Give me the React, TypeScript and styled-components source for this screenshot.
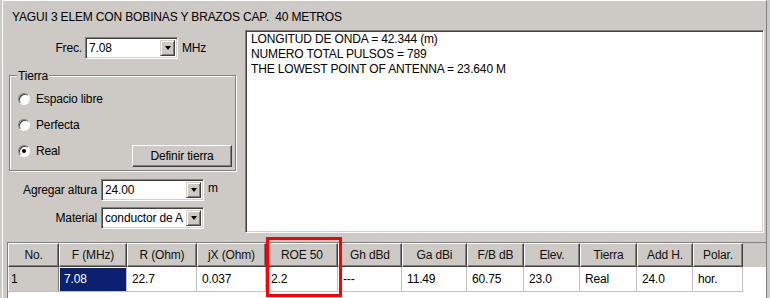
import React from 'react'
import styled, { createGlobalStyle } from 'styled-components'

const FACE = '#cdc9c5'

const GlobalStyle = createGlobalStyle`
  html, body { margin: 0; padding: 0; background: ${FACE}; }
  * { box-sizing: border-box; }
`

const Window = styled.div`
  position: relative;
  width: 770px;
  height: 298px;
  overflow: hidden;
  background: ${FACE};
  font-family: 'Liberation Sans', Arial, sans-serif;
  font-size: 12px;
  line-height: 14px;
  letter-spacing: -0.15px;
  color: #000;
  padding-left: 2px;
`

const Panel = styled.div`
  height: 100%;
  margin-right: 3px;
  border-left: 1px solid #fff;
  border-top: 1px solid #fff;
  border-right: 1px solid #808080;
`

const Title = styled.div`
  height: 29px;
  padding: 9px 0 0 9px;
  white-space: pre;
`

const TopSection = styled.div`
  display: flex;
  gap: 9px;
  height: 203px;
  padding-left: 5px;
`

const LeftCol = styled.div`
  width: 228px;
  padding-top: 7px;
  display: flex;
  flex-direction: column;
`

const FieldRow = styled.div<{ $gap: number }>`
  display: flex;
  align-items: center;
  height: 22px;
  margin-top: ${p => p.$gap}px;
`

const Label = styled.span<{ $w: number }>`
  width: ${p => p.$w}px;
  text-align: right;
  margin-right: ${p => (p.$w > 80 ? 4 : 3)}px;
`

const Unit = styled.span<{ $lift?: number }>`
  margin-left: 4px;
  margin-bottom: ${p => p.$lift || 0}px;
`

const Combo = styled.div<{ $w: number }>`
  width: ${p => p.$w}px;
  height: 22px;
  display: flex;
  background: #fff;
  border-style: solid;
  border-width: 1px;
  border-color: #808080 #fff #fff #808080;
  box-shadow: inset 1px 1px 0 #404040, inset -1px -1px 0 #d4d0c8;
  padding: 2px 2px 2px 3px;
`

const ComboText = styled.span`
  flex: 1;
  overflow: hidden;
  white-space: nowrap;
  line-height: 16px;
`

const DropButton = styled.span`
  width: 15px;
  height: 16px;
  background: ${FACE};
  border-style: solid;
  border-width: 1px;
  border-color: #d4d0c8 #404040 #404040 #d4d0c8;
  box-shadow: inset 1px 1px 0 #fff, inset -1px -1px 0 #808080;
  display: flex;
  align-items: center;
  justify-content: center;

  &::after {
    content: '';
    border-left: 3.5px solid transparent;
    border-right: 3.5px solid transparent;
    border-top: 4px solid #000;
  }
`

const GroupBox = styled.div`
  margin-top: 16px;
  margin-left: 1px;
  width: 227px;
  height: 96px;
  border: 1px solid #808080;
  box-shadow: inset 1px 1px 0 #fff, 1px 1px 0 #fff;
  display: flex;
  flex-direction: column;
  padding: 0 3px 0 8px;
`

const Legend = styled.span`
  align-self: flex-start;
  margin: -7px 0 3px -1px;
  padding: 0 1px;
  background: ${FACE};
`

const RadioRow = styled.div`
  display: flex;
  align-items: center;
  justify-content: space-between;
  height: 26px;
`

const RadioLabel = styled.label`
  display: flex;
  align-items: center;
  gap: 6px;
`

const RadioCircle = styled.span<{ $on?: boolean }>`
  width: 12px;
  height: 12px;
  border-radius: 50%;
  background: #fff;
  border: 1px solid;
  border-color: #808080 #fff #fff #808080;
  box-shadow: inset 1px 1px 0 #404040;
  display: flex;
  align-items: center;
  justify-content: center;

  &::after {
    content: '';
    width: 4px;
    height: 4px;
    border-radius: 50%;
    background: ${p => (p.$on ? '#000' : 'transparent')};
  }
`

const Button = styled.button`
  margin-top: 10px;
  width: 100px;
  height: 22px;
  font: inherit;
  letter-spacing: inherit;
  color: #000;
  background: ${FACE};
  border: 1px solid;
  border-color: #fff #404040 #404040 #fff;
  box-shadow: inset -1px -1px 0 #808080;
  padding: 0;
`

const TextArea = styled.div`
  width: 519px;
  height: 203px;
  background: #fff;
  border: 1px solid;
  border-color: #808080 #fff #fff #808080;
  box-shadow: inset 1px 1px 0 #404040, inset -1px -1px 0 #d4d0c8;
  padding: 1px 5px;
  line-height: 15px;
`

const Grid = styled.div`
  margin: 9px 0 0 4px;
  height: 60px;
  background: #fff;
  border-left: 1px solid #808080;
  border-top: 1px solid #808080;
`

const HeadRow = styled.div`
  display: flex;
  height: 24px;
  background: ${FACE};
`

const HeadCell = styled.div<{ $w: number }>`
  width: ${p => p.$w}px;
  display: flex;
  align-items: center;
  justify-content: center;
  border: 1px solid;
  border-color: #fff #404040 #404040 #fff;
  box-shadow: inset -1px -1px 0 #808080;
  color: #111;
`

const DataRow = styled.div`
  display: flex;
  height: 25px;
`

const DataCell = styled.div<{ $w: number; $kind?: 'head' | 'sel' }>`
  width: ${p => p.$w}px;
  display: flex;
  align-items: center;
  padding-left: ${p => (p.$kind === 'head' ? 3 : 5)}px;
  border-right: 1px solid ${p => (p.$kind === 'head' ? '#808080' : '#c0c0c0')};
  border-bottom: 1px solid #c0c0c0;
  background: ${p => (p.$kind === 'head' ? FACE : p.$kind === 'sel' ? '#0b2170' : '#fff')};
  color: ${p => (p.$kind === 'sel' ? '#fff' : '#000')};
  box-shadow: ${p => (p.$kind === 'head' ? 'inset 1px 0 0 #fff' : p.$kind === 'sel' ? 'inset 1px 1px 0 #fff' : 'none')};
`

const Highlight = styled.div`
  position: absolute;
  left: 266px;
  top: 237px;
  width: 76px;
  height: 60px;
  border: 3px solid #ff0000;
  pointer-events: none;
`

const columns = [
  { title: 'No.', w: 51, value: '1' },
  { title: 'F (MHz)', w: 68, value: '7.08' },
  { title: 'R (Ohm)', w: 70, value: '22.7' },
  { title: 'jX (Ohm)', w: 69, value: '0.037' },
  { title: 'ROE 50', w: 72, value: '2.2' },
  { title: 'Gh dBd', w: 64, value: '---' },
  { title: 'Ga dBi', w: 65, value: '11.49' },
  { title: 'F/B dB', w: 57, value: '60.75' },
  { title: 'Elev.', w: 56, value: '23.0' },
  { title: 'Tierra', w: 57, value: 'Real' },
  { title: 'Add H.', w: 56, value: '24.0' },
  { title: 'Polar.', w: 50, value: 'hor.' },
]

const output = [
  'LONGITUD DE ONDA = 42.344 (m)',
  'NUMERO TOTAL PULSOS = 789',
  'THE LOWEST POINT OF ANTENNA = 23.640 M',
]

export default function App() {
  return (
    <>
      <GlobalStyle />
      <Window>
        <Panel>
          <Title>YAGUI 3 ELEM CON BOBINAS Y BRAZOS CAP.  40 METROS</Title>
          <TopSection>
            <LeftCol>
              <FieldRow $gap={0}>
                <Label $w={74}>Frec.</Label>
                <Combo $w={93}>
                  <ComboText>7.08</ComboText>
                  <DropButton />
                </Combo>
                <Unit>MHz</Unit>
              </FieldRow>

              <GroupBox>
                <Legend>Tierra</Legend>
                <RadioRow>
                  <RadioLabel>
                    <RadioCircle />
                    Espacio libre
                  </RadioLabel>
                </RadioRow>
                <RadioRow>
                  <RadioLabel>
                    <RadioCircle />
                    Perfecta
                  </RadioLabel>
                </RadioRow>
                <RadioRow>
                  <RadioLabel>
                    <RadioCircle $on />
                    Real
                  </RadioLabel>
                  <Button>Definir tierra</Button>
                </RadioRow>
              </GroupBox>

              <FieldRow $gap={8}>
                <Label $w={89}>Agregar altura</Label>
                <Combo $w={103}>
                  <ComboText>24.00</ComboText>
                  <DropButton />
                </Combo>
                <Unit $lift={5}>m</Unit>
              </FieldRow>
              <FieldRow $gap={6}>
                <Label $w={89}>Material</Label>
                <Combo $w={103}>
                  <ComboText>conductor de A</ComboText>
                  <DropButton />
                </Combo>
              </FieldRow>
            </LeftCol>

            <TextArea>
              {output.map(line => (
                <div key={line}>{line}</div>
              ))}
            </TextArea>
          </TopSection>

          <Grid>
            <HeadRow>
              {columns.map(c => (
                <HeadCell key={c.title} $w={c.w}>
                  {c.title}
                </HeadCell>
              ))}
            </HeadRow>
            <DataRow>
              {columns.map((c, i) => (
                <DataCell key={c.title} $w={c.w} $kind={i === 0 ? 'head' : i === 1 ? 'sel' : undefined}>
                  {c.value}
                </DataCell>
              ))}
            </DataRow>
          </Grid>
        </Panel>
        <Highlight />
      </Window>
    </>
  )
}
